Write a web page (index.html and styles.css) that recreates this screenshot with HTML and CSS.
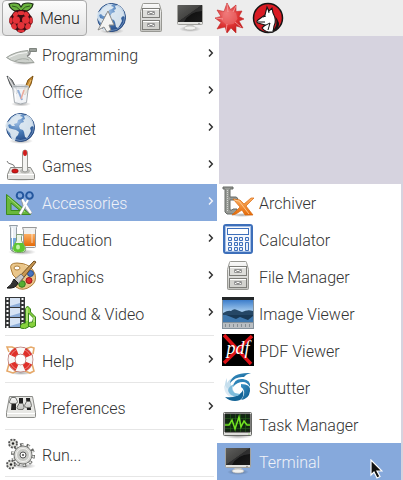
FILE: index.html
```
<!DOCTYPE html>
<html lang="en">
<head>
<meta charset="utf-8">
<meta name="viewport" content="width=device-width, initial-scale=1">
<title>Desktop menu</title>
<link rel="stylesheet" href="styles.css">
</head>
<body>
<svg class="defs" width="0" height="0" aria-hidden="true">
  <defs>
    <radialGradient id="gGlobe" cx=".38" cy=".3" r=".8"><stop offset="0" stop-color="#9fc0e6"/><stop offset=".5" stop-color="#4577b3"/><stop offset="1" stop-color="#1d3f7a"/></radialGradient>
    <linearGradient id="gMetal" x1="0" y1="0" x2="0" y2="1"><stop offset="0" stop-color="#fafafa"/><stop offset="1" stop-color="#c2c2be"/></linearGradient>
    <linearGradient id="gScreen" x1="0" y1="0" x2="1" y2="1"><stop offset="0" stop-color="#4a4a48"/><stop offset=".48" stop-color="#2c2c2a"/><stop offset=".5" stop-color="#111"/><stop offset="1" stop-color="#1c1c1c"/></linearGradient>
    <linearGradient id="gOrange" x1="0" y1="0" x2="0" y2="1"><stop offset="0" stop-color="#fcb063"/><stop offset="1" stop-color="#e46a08"/></linearGradient>
    <linearGradient id="gSky" x1="0" y1="0" x2="0" y2="1"><stop offset="0" stop-color="#3c7dcb"/><stop offset="1" stop-color="#b4d6f2"/></linearGradient>
    <radialGradient id="gRed" cx=".4" cy=".35" r=".7"><stop offset="0" stop-color="#f08080"/><stop offset=".6" stop-color="#dd3333"/><stop offset="1" stop-color="#c01818"/></radialGradient>
    <radialGradient id="gShade"><stop offset="0" stop-color="#000" stop-opacity=".35"/><stop offset="1" stop-color="#000" stop-opacity="0"/></radialGradient>
    <linearGradient id="gSwirl" x1="0" y1="0" x2="1" y2="1"><stop offset="0" stop-color="#3b94c8"/><stop offset="1" stop-color="#0b5688"/></linearGradient>
  </defs>
  <symbol id="globe" viewBox="0 0 32 32">
    <ellipse cx="16" cy="29" rx="12" ry="3" fill="url(#gShade)"/>
    <circle cx="15.500" cy="15.500" r="14" fill="url(#gGlobe)" stroke="#24487f"/>
    <path d="M4 9 7 5l5-3 5 0-2 2 3 1-2 2-3 1-1 3-3 1 1 2-3 0-2-2-2 1 1 3 3 1 4 1 3 2-1 3-2 2-1 4-2 0-2-4-1-4-3-3-2-4 1-3z" fill="#e6eef4" opacity=".9"/>
    <path d="m19 4 3-1 4 3 2 4 1 5-2-1-2 2 1 3-2 4-2 3-2-1-1-5-1-2-3-1-1-3 2-3 3-1-1-2 2-1z" fill="#e6eef4" opacity=".9"/>
    <circle cx="15.500" cy="15.500" r="13" fill="none" stroke="#a9c8e8" stroke-opacity=".5"/>
  </symbol>
  <symbol id="cabinet" viewBox="0 0 32 32">
    <path d="M8.500 1.500h15q1 0 1 1l2 7v19q0 1-1 1h-19q-1 0-1-1v-19l2-7q0-1 1-1z" fill="url(#gMetal)" stroke="#989893"/>
    <rect x="7.500" y="6.500" width="17" height="9" fill="#dededb" stroke="#7d7d79"/>
    <rect x="7.500" y="18.500" width="17" height="9" fill="#d3d3cf" stroke="#7d7d79"/>
    <path d="M8 7.500h16M8 19.500h16" stroke="#fff"/>
    <path d="M12.500 9.500h7v3h-7zM12.500 21.500h7v3h-7z" fill="#f8f8f6" stroke="#999"/>
    <path d="m13 10 3 2 3-2M13 22l3 2 3-2" fill="none" stroke="#777"/>
  </symbol>
  <symbol id="monitor" viewBox="0 0 32 32">
    <ellipse cx="16" cy="27" rx="11" ry="3" fill="url(#gShade)"/>
    <path d="M13 21h6l1 5H12z" fill="#c9c9c7"/><ellipse cx="16" cy="26" rx="6" ry="2" fill="#f2f2f0" stroke="#b5b5b1" stroke-width=".7"/>
    <path d="M3.500 3.500h25v18q0 1-1 1h-23q-1 0-1-1z" fill="#e2e2df" stroke="#a1a19d"/>
    <path d="M4 3h24v17H4z" fill="url(#gScreen)"/>
    <path d="M4 3h24v6Q15 10 10 20H4z" fill="#fff" opacity=".12"/>
    <circle cx="25" cy="21.500" r=".7" fill="#777"/>
  </symbol>
  <symbol id="chevron" viewBox="0 0 6 8"><path d="m1 .5 3.300 3.500L1 7.500" fill="none" stroke="currentColor" stroke-width="1.500"/></symbol>
</svg>

<header class="taskbar">
  <button class="menu-button" type="button">
    <svg class="berry" viewBox="0 0 26 32" aria-hidden="true">
      <path d="M13 9C8 10 4 8 2 5L1 2q5-2 10 0l2 3 2-3q5-2 10 0l-1 3c-2 3-6 5-11 4z" fill="#6ab33e" stroke="#1c2a15" stroke-width="1.200"/>
      <path d="M4 4q5 0 8 4M22 4q-5 0-8 4" fill="none" stroke="#2e5c1b"/>
      <path d="M13 8q5-1 8 3 1 2 3 4 2 5-1 8-1 4-5 5-2 3-5 3t-5-3q-4-1-5-5-3-3-1-8 2-2 3-4 3-4 8-3z" fill="#3b0d12"/>
      <g fill="#e33238"><ellipse cx="13" cy="11" rx="3.600" ry="2"/><ellipse cx="7.500" cy="12.500" rx="2.800" ry="2.300" transform="rotate(-40 7.500 12.500)"/><ellipse cx="18.500" cy="12.500" rx="2.800" ry="2.300" transform="rotate(40 18.500 12.500)"/><circle cx="8.300" cy="18" r="3.700"/><circle cx="17.700" cy="18" r="3.700"/><ellipse cx="3" cy="18.500" rx="1.600" ry="3.300"/><ellipse cx="23" cy="18.500" rx="1.600" ry="3.300"/><circle cx="13" cy="23.500" r="3.600"/><ellipse cx="6" cy="24.300" rx="2.600" ry="3.200" transform="rotate(-25 6 24.300)"/><ellipse cx="20" cy="24.300" rx="2.600" ry="3.200" transform="rotate(25 20 24.300)"/><ellipse cx="13" cy="28.900" rx="3.500" ry="1.300"/></g>
    </svg>
    <span>Menu</span>
  </button>
  <button class="launcher" type="button" aria-label="Web browser"><svg class="icon" viewBox="0 0 32 32"><use href="#globe"/><path d="M12 9 2 28l6-3 3 5 4-2-2-5h5z" fill="#f4f4f2" stroke="#8c8c8a"/></svg></button>
  <button class="launcher" type="button" aria-label="Files"><svg class="icon"><use href="#cabinet"/></svg></button>
  <button class="launcher" type="button" aria-label="Console"><svg class="icon"><use href="#monitor"/></svg></button>
  <button class="launcher" type="button" aria-label="Mathematica"><svg class="icon" viewBox="0 0 32 32"><path d="m14 1 3.500 6.500L23 3l0 6.500 6-.5-3 5.500 5 2.500-5 2 4 7-7-2 0 7-5-5-4 5-2-6-8 2 4-6.500L2 16l6-1.500L4 8l7 1.500z" fill="url(#gRed)" stroke="#c52a2a" stroke-width=".6"/><path d="m11 10 6-1.500 6 2.500 1.500 6-4 5-7 1-5-4.500z" fill="#ee7474" opacity=".55"/><path d="m14 2 1 8M23 4l-3 6M3 16l7 1M13 29l1-7M28 25l-6-5" stroke="#f7b0b0" stroke-width=".7"/></svg></button>
  <button class="launcher" type="button" aria-label="Wolfram"><svg class="icon" viewBox="0 0 32 32"><circle cx="16" cy="16" r="14.500" fill="#d91c24" stroke="#151515" stroke-width="1.500"/><path d="m15 5 2 4 3-3 1 5q4 7 1 13l-1 6q-7 1-11-4l3-3-7-2q-2-1 0-3l7-5z" fill="#fff" stroke="#151515" stroke-width="1.100"/><path d="m16 7 1 4M11 15l3-1M6 20h7M12 24l6-3-2 7" fill="none" stroke="#151515"/><path d="M20 29q7-5 3-15 6 7 3 12-3 3-6 3z" fill="#151515"/></svg></button>
</header>

<main class="desktop">
  <nav class="menu" aria-label="Applications">
    <a class="item" href="#"><svg class="icon" viewBox="0 0 32 32"><ellipse cx="19" cy="25" rx="12" ry="2" fill="url(#gShade)"/><path d="M1.500 19.500Q10 13.500 23 12.500l1 4.500-2 1.500 3 1.500 4 4.500Q10 26.500 1.500 19.500z" fill="#cdd1cc" stroke="#9ba09a"/><path d="M4 19.500q9-5 18-5" stroke="#f5f6f4" fill="none"/><path d="M10 23q8-4 14-1" stroke="#a7aca6" fill="none"/><path d="M22 18q3-1 3-3.500t4-2.500" fill="none" stroke="#888" stroke-width="1.500"/><path d="M24.500 10.500h7v3h-7z" fill="#9ba09b" stroke="#7f857f"/></svg><span>Programming</span><svg class="chevron"><use href="#chevron"/></svg></a>
    <a class="item" href="#"><svg class="icon" viewBox="0 0 32 32"><ellipse cx="16" cy="29" rx="10" ry="2.500" fill="url(#gShade)"/><path d="m2 1 5 4 6 12-2 2-6-10z" fill="#a6a8aa" stroke="#4c5052"/><path d="m3 2 8 14" stroke="#e9e9e9"/><path d="m28 1-5 4-5 13 2 2 6-11z" fill="#c98a2e" stroke="#7c5110"/><path d="M26 5 19 19" stroke="#efc677"/><path d="M7.500 11.500h16l-2 16q-6 3-12 0z" fill="#eef1f4" fill-opacity=".85" stroke="#a7adb2"/><ellipse cx="15.500" cy="11.500" rx="8" ry="1.500" fill="none" stroke="#c5cace"/><path d="m13 15 4 10" stroke="#8fadd8" stroke-width="2"/><path d="m19 15-3 9" stroke="#eaaa9c" stroke-width="1.500"/><path d="m10 14 1 12" stroke="#fff"/></svg><span>Office</span><svg class="chevron"><use href="#chevron"/></svg></a>
    <a class="item" href="#"><svg class="icon"><use href="#globe"/></svg><span>Internet</span><svg class="chevron"><use href="#chevron"/></svg></a>
    <a class="item" href="#"><svg class="icon" viewBox="0 0 32 32"><ellipse cx="16" cy="30" rx="15" ry="2" fill="url(#gShade)"/><path d="M10 19q-1-4-4-4-3 0-4-3" fill="none" stroke="#777"/><path d="M5.500 18.500h20l4 7v4q0 1-1 1h-25q-1 0-1-1v-4z" fill="#e4e4e1" stroke="#888985"/><path d="M3 25.500h26" stroke="#fff"/><ellipse cx="20" cy="22" rx="5" ry="2.500" fill="#babab6"/><path d="M17.500 4q0-3 2.500-3t2.500 3v18q-2.500 2-5 0z" fill="#f3f3f1" stroke="#999a96"/><ellipse cx="20" cy="4" rx="2" ry="3" fill="#cf1c1c"/><ellipse cx="10" cy="22" rx="3.200" ry="2" fill="#d31717" stroke="#8d1010" stroke-width=".7"/></svg><span>Games</span><svg class="chevron"><use href="#chevron"/></svg></a>
    <a class="item selected" href="#" aria-current="true"><svg class="icon" viewBox="0 0 32 32"><path d="M1.500 8.500v20h24z" fill="#6ab83c" stroke="#3b8a1e"/><path d="M6 17v7.500h9z" fill="#86a9dc" stroke="#3b8a1e"/><path d="m3 11 17 15" stroke="#a6dd7e"/><path d="m16 12 11 15-2 1-7-8zM24 12l-10 15 2 2 5-9z" fill="#f4f4f2" stroke="#8b8d8c" stroke-width=".8"/><path d="m17 13 9 14M23 14l-8 14" stroke="#fff" stroke-width="2"/><g fill="none" stroke="#24579e" stroke-width="2"><circle cx="15" cy="9.500" r="3.300"/><circle cx="24.500" cy="9.500" r="3.300"/></g><path d="M13 8h3M23 8h3" stroke="#7ba3dc"/></svg><span>Accessories</span><svg class="chevron"><use href="#chevron"/></svg></a>
    <a class="item" href="#"><svg class="icon" viewBox="0 0 32 32"><ellipse cx="17" cy="29" rx="14" ry="3" fill="url(#gShade)"/><path d="M4.500 2.500h8l-1 2v22q-3 4-6 0v-22z" fill="#e9eff4" stroke="#939da5"/><path d="M6 15h5v11q-2.500 3-5 0z" fill="#72a8e0"/><path d="M7.500 5v20" stroke="#fff"/><path d="M17.500 4.500h14l-1 2v17q0 1-1 1h-10q-1 0-1-1v-16z" fill="#f0f1f0" stroke="#999"/><path d="M19 11h11v12H19z" fill="url(#gOrange)"/><path d="M27 7v13" stroke="#fff" opacity=".7"/><path d="M11.500 11.500h6l-1 2v4l4 7q1 5-4 5h-5q-5 0-4-5l4-7v-4z" fill="#ecf5e7" stroke="#819b76"/><path d="M10 20h8l2 4.500q0 4.500-4 4.500h-4q-4 0-4-4.500z" fill="#5dc632"/><ellipse cx="13" cy="24" rx="2" ry="2.500" fill="#c3f2a6"/></svg><span>Education</span><svg class="chevron"><use href="#chevron"/></svg></a>
    <a class="item" href="#"><svg class="icon" viewBox="0 0 32 32"><path d="M6 9q-2-6 6-6 14 0 18 11 2 8-4 12-8 6-15 1-4-4 1-8-5-3-6-10z" fill="#eac68a" stroke="#ad7c38"/><ellipse cx="12" cy="8" rx="3" ry="2" fill="#fff" stroke="#ad7c38"/><path d="M20 5q7 4 8 11" fill="none" stroke="#f8e1b5"/><circle cx="25.500" cy="13.500" r="3" fill="#4673bf" stroke="#24488b"/><circle cx="24" cy="20.500" r="3" fill="#db3131" stroke="#a01616"/><circle cx="17" cy="24" r="3.300" fill="#55ae32" stroke="#35791c"/><path d="m29 1 2 1-15 19-3-3z" fill="#c99752" stroke="#6f4e20"/><path d="m16 14 3 3-6 7-4-4z" fill="#c9c9c7" stroke="#777"/><path d="m9 19 4 4q-2 6-11 5 5-3 7-9z" fill="#333" stroke="#171717"/></svg><span>Graphics</span><svg class="chevron"><use href="#chevron"/></svg></a>
    <a class="item" href="#"><svg class="icon" viewBox="0 0 32 32"><path d="M0 0h20v31H0z" fill="#343637"/><path d="M5 1h10v9H5zM5 11h10v9H5zM5 21h10v9H5z" fill="#8eaed8"/><path d="M5 1h10v5L5 9zM5 11h10v5L5 19zM5 21h10v5L5 29z" fill="#d7e4f4"/><path d="M2.500 1v30M17.500 1v30" stroke="#fff" stroke-width="2" stroke-dasharray="2 2"/><path d="m20.500 11.500 2-2.500 3 3v3l5 5v9q-4 3-7 0-1-4 4-4l1-4-5-5v14q-4 3-8 1-1-5 5-5z" fill="#87d13d" stroke="#3b861d"/><path d="M22 11v13M29 20v5" stroke="#d1f3a8"/></svg><span>Sound &amp; Video</span><svg class="chevron"><use href="#chevron"/></svg></a>
    <hr class="rule">
    <a class="item" href="#"><svg class="icon" viewBox="0 0 32 32"><ellipse cx="16" cy="29" rx="12" ry="2" fill="url(#gShade)"/><path d="M4 8 2 3h5l5 2M20 5l6-2 3 1-1 6M4 20l-2 7 6 2 4-2M20 27l5 2 4-2-2-7" fill="none" stroke="#e6a96a" stroke-width="1.600"/><circle cx="15.500" cy="15.500" r="9" fill="none" stroke="#9b3731" stroke-width="7.500"/><circle cx="15.500" cy="15.500" r="9" fill="none" stroke="#f7f7f5" stroke-width="6.500"/><circle cx="15.500" cy="15.500" r="9" fill="none" stroke="#df3029" stroke-width="6.500" stroke-dasharray="7 7.137" stroke-dashoffset="-3.500"/><circle cx="15.500" cy="15.500" r="10.500" fill="none" stroke="#fff" opacity=".35"/></svg><span>Help</span><svg class="chevron"><use href="#chevron"/></svg></a>
    <hr class="rule">
    <a class="item" href="#"><svg class="icon" viewBox="0 0 32 32"><path d="M4.500 5.500h23l3 16v4q0 1-1 1h-27q-1 0-1-1v-4z" fill="#e8e8e5" stroke="#8b8c89"/><path d="M2 22.500h28" stroke="#fff"/><path d="M7 7h4v12H6zM14 7h4v12h-4zM21 7h4l1 12h-4z" fill="#222"/><g fill="url(#gMetal)" stroke="#747572"><path d="M6.500 6.500h4l2 4q0 2-2 2h-5q-1 0-1-2zM14 12.500h4l1 4q0 2-2 2h-3q-2 0-2-2zM21.500 10.500h4l1 4q0 2-2 2h-3q-2 0-2-2z"/></g></svg><span>Preferences</span><svg class="chevron"><use href="#chevron"/></svg></a>
    <hr class="rule">
    <a class="item" href="#"><svg class="icon" viewBox="0 0 32 32"><ellipse cx="19" cy="28" rx="12" ry="3" fill="url(#gShade)"/><circle cx="18" cy="17" r="10.500" fill="none" stroke="#60615f" stroke-width="3" stroke-dasharray="3.300 3.300"/><circle cx="18" cy="17" r="10.300" fill="none" stroke="#e4e4e1" stroke-width="2" stroke-dasharray="2 4.600" stroke-dashoffset="-.6"/><circle cx="18" cy="17" r="9" fill="#d9d9d6" stroke="#777875"/><circle cx="18" cy="17" r="6.500" fill="#c8c9c5" stroke="#f3f3f1"/><circle cx="18" cy="17" r="3" fill="#f9f9f8" stroke="#555"/><circle cx="18" cy="17" r="1" fill="#444"/><g fill="#deded9" stroke="#555"><circle cx="8" cy="5.500" r="4" stroke-width="1.800" stroke-dasharray="2 1.140"/><circle cx="6" cy="26.500" r="4" stroke-width="1.800" stroke-dasharray="2 1.140"/></g><circle cx="8" cy="5.500" r="1.200" fill="#222"/><circle cx="6" cy="26.500" r="1.200" fill="#222"/></svg><span>Run...</span></a>
    <hr class="rule">
  </nav>

  <nav class="menu submenu" aria-label="Accessories">
    <a class="item" href="#"><svg class="icon" viewBox="0 0 32 32"><ellipse cx="20" cy="29" rx="12" ry="2" fill="url(#gShade)"/><path d="M1 1h10v2H8v8h6q2 0 2 4h-3l-1-1H8v10h2l1-1h4q0 5-2 5H5l-2-2V3H1z" fill="#969994" stroke="#676a66"/><path d="M5.500 4v22" stroke="#d4d6d2" stroke-dasharray="1 1"/><path d="m11 13 7 1 4 4 7-6h3l-8 8 7 9h-8l-3-5-6 4-4 1 8-8z" fill="url(#gOrange)" stroke="#d8690f" stroke-width=".7"/><path d="m12 14 5 1 10 13" fill="none" stroke="#ffd2a0" stroke-width=".8"/></svg><span>Archiver</span></a>
    <a class="item" href="#"><svg class="icon" viewBox="0 0 32 32"><rect x="2" y="2" width="28" height="28" rx="2" fill="#f6f8fc" stroke="#3d6fba" stroke-width="2"/><rect x="3.500" y="3.500" width="25" height="25" fill="none" stroke="#a6c0e6"/><rect x="5.500" y="5.500" width="21" height="6" fill="#fff" stroke="#3d6fba"/><g fill="#e6edf8" stroke="#3d6fba"><path d="M6.500 14.500h3v3h-3zM12.500 14.500h3v3h-3zM17.500 14.500h3v3h-3zM23.500 14.500h3v3h-3zM6.500 19.500h3v3h-3zM12.500 19.500h3v3h-3zM17.500 19.500h3v3h-3zM6.500 24.500h3v3h-3zM12.500 24.500h3v3h-3zM17.500 24.500h3v3h-3zM23.500 19.500h3v8h-3z"/></g></svg><span>Calculator</span></a>
    <a class="item" href="#"><svg class="icon"><use href="#cabinet"/></svg><span>File Manager</span></a>
    <a class="item" href="#"><svg class="icon" viewBox="0 0 32 32"><path d="M0 0h32v32H0z" fill="#84919b"/><path d="M0 0h32v3H0z" fill="#232729"/><path d="M1 3h30v13H1z" fill="url(#gSky)"/><path d="M1 16q5-3 8-2 3-3 6-1l5 2q6-3 11-1v4H1z" fill="#254766"/><path d="M1 18h30v7H1z" fill="#3f78ae"/><path d="m4 18 10 4 4-2 8 3 5-4v-1z" fill="#193854"/><path d="M1 26h30v5H1z" fill="#b9bec2"/><path d="M3 28.500h27" stroke="#858e94" stroke-width="3" stroke-dasharray="1 3"/></svg><span>Image Viewer</span></a>
    <a class="item" href="#"><svg class="icon" viewBox="0 0 32 32"><path d="M0 0h32v32H0z" fill="#000"/><path d="m2 1 27 29M30 2 2 29" stroke="#dc1116" stroke-width="3.500"/><text class="pdf-text" x="16" y="20" text-anchor="middle">pdf</text></svg><span>PDF Viewer</span></a>
    <a class="item" href="#"><svg class="icon" viewBox="0 0 32 32"><path d="M5 7q-4 7 0 12l7 2-3-7q-1-4 2-7-4 1-6 5z" fill="#c5deed"/><path d="M2 14q0 13 13 13l-5-4 1-5q-6 1-9-4z" fill="#dceaf4"/><path d="M8 12Q10 1 29 2q-5 1-7 4-8-1-14 6z" fill="url(#gSwirl)"/><path d="M11 16q1-9 10-8 8 1 7 8-3-5-7-5-6 0-10 5z" fill="#2d83b8"/><path d="M19 13q10 0 9 7-1 8-9 9 4-5 3-9-1-3-3-4z" fill="url(#gSwirl)"/><path d="M21 19q2 11-8 11-6 0-10-4 7 1 11-1 5-2 7-6z" fill="#146496"/><path d="M12 13q-4 6 1 9l5 1q-3 4-9 1-7-6 3-11z" fill="#7dbbdb"/></svg><span>Shutter</span></a>
    <a class="item" href="#"><svg class="icon" viewBox="0 0 32 32"><ellipse cx="16" cy="28" rx="15" ry="3" fill="url(#gShade)"/><rect x="1.500" y="4.500" width="28" height="23" rx="1" fill="#dededb" stroke="#666865"/><path d="M3 6h25v18H3z" fill="#102710" stroke="#222"/><path d="M3 10.500h25M3 15.500h25M3 20.500h25M8.500 6v18M13.500 6v18M18.500 6v18M23.500 6v18" stroke="#28631b" stroke-width=".6"/><path d="M3 17h4l3-5 3 9 4-12 2 10 3-6 3 4h3" fill="none" stroke="#73e522" stroke-width="1.500"/><circle cx="27" cy="26" r=".6" fill="#63c72e"/></svg><span>Task Manager</span></a>
    <a class="item selected" href="#" aria-current="true"><svg class="icon"><use href="#monitor"/></svg><span>Terminal</span></a>
  </nav>
  <svg class="pointer" viewBox="0 0 13 20" aria-hidden="true"><path d="M1 1v15l3-3 3 6 3-1.500-3-5.500h5z" fill="#111" stroke="#fff" stroke-width="1.200"/></svg>
</main>
</body>
</html>
```
FILE: styles.css
```
* {
  box-sizing: border-box;
}

body {
  margin: 0;
  min-height: 100vh;
  display: flex;
  flex-direction: column;
  background: #d6d3df;
  color: #333;
  font: 300 16px/20px Roboto, "Liberation Sans", sans-serif;
}

.defs {
  position: absolute;
}

.taskbar {
  display: flex;
  align-items: flex-start;
  gap: 7px;
  height: 36px;
  padding-left: 2px;
  background: #ededed;
}

.menu-button {
  display: flex;
  align-items: center;
  gap: 6px;
  height: 36px;
  margin-right: 2px;
  padding: 0 6px 0 5px;
  border: 1px solid #aaa;
  border-radius: 4px;
  background: linear-gradient(#fcfcfc, #e2e2e2);
  color: #222;
  font: inherit;
}

.menu-button span {
  padding-top: 2px;
}

.berry {
  width: 26px;
  height: 32px;
}

.launcher {
  padding: 2px 0;
  border: 0;
  background: none;
}

.icon {
  display: block;
  flex: none;
  width: 32px;
  height: 32px;
}

.desktop {
  position: relative;
  flex: 1;
  display: flex;
  align-items: stretch;
}

.menu {
  flex: none;
  width: 219px;
  padding-right: 2px;
  background: #fff;
}

.submenu {
  flex: 1;
  align-self: flex-start;
  margin: 148px 2px 0 -2px;
  padding-right: 0;
}

.item {
  display: flex;
  align-items: center;
  gap: 5px;
  padding: 2px 3px 3px 5px;
  color: inherit;
  text-decoration: none;
}

.item span {
  flex: 1;
  padding-top: 4px;
}

.selected {
  background: #86a9dc;
  color: #f0f2f8;
}

.chevron {
  width: 6px;
  height: 8px;
  margin-bottom: 2px;
}

.rule {
  height: 1px;
  margin: 3px 3px 6px 5px;
  border: 0;
  background: #e6e6e6;
}

.rule:last-child {
  margin-bottom: 0;
}

.pdf-text {
  fill: #fff;
  font: italic 400 18px "Liberation Serif", serif;
}

.pointer {
  position: absolute;
  right: 20px;
  bottom: 1px;
  width: 13px;
  height: 20px;
}
```
